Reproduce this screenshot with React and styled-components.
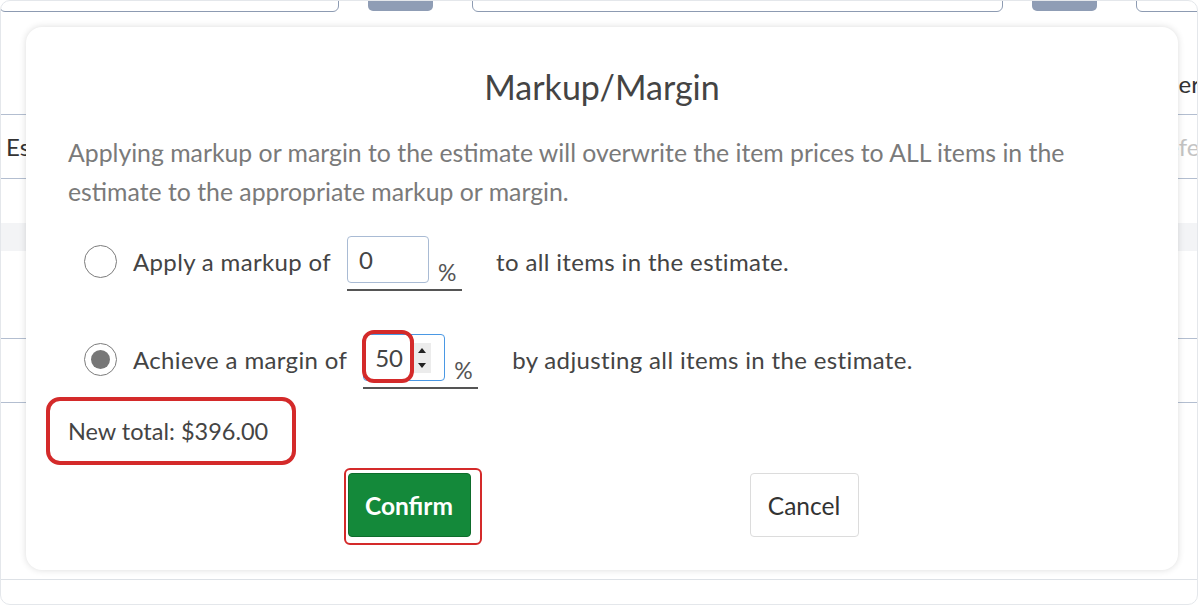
import styled, { createGlobalStyle } from 'styled-components';

const GlobalStyle = createGlobalStyle`
  html, body {
    margin: 0;
    padding: 0;
    background: #fff;
    overflow: hidden;
  }

  body {
    font-family: Lato, 'Liberation Sans', sans-serif;
  }
`;

function Radio({ checked }) {
  return <RadioCircle>{checked && <RadioDot />}</RadioCircle>;
}

function Spinner() {
  return (
    <SpinBox>
      <svg width="10" height="26" viewBox="0 0 10 26">
        <path d="M1 8 L5 3 L9 8 Z" fill="#222" />
        <path d="M1 18 L5 23 L9 18 Z" fill="#222" />
      </svg>
    </SpinBox>
  );
}

function App() {
  return (
    <>
      <GlobalStyle />
      <Frame>
        {/* page behind the dialog */}
        <Toolbar>
          <Field $width="340px" />
          <ToolButton />
          <Field $width="531px" />
          <ToolButton />
          <Field $grow />
        </Toolbar>

        <TableRow $height="102px">
          <Cell />
          <SideCell $align="flex-end" $shift="-50px">Owner</SideCell>
        </TableRow>
        <TableRow $height="63px">
          <Cell>Estimate #</Cell>
          <SideCell $muted $shift="-25px">Reference</SideCell>
        </TableRow>
        <TableRow $height="44px" $noBorder />
        <TableRow $height="28px" $band $noBorder />
        <TableRow $height="87px" />
        <TableRow $height="63px" />
        <TableRow $height="176px" $light />

        {/* dialog */}
        <Dialog>
          <Title>Markup/Margin</Title>
          <Intro>
            Applying markup or margin to the estimate will overwrite the item prices to ALL items in the
            estimate to the appropriate markup or margin.
          </Intro>

          <Options>
            <OptionRow>
              <Radio />
              <OptionText>Apply a markup of</OptionText>
              <PercentGroup>
                <NumberBox>0</NumberBox>
                <Percent>%</Percent>
              </PercentGroup>
              <OptionText>to all items in the estimate.</OptionText>
            </OptionRow>

            <OptionRow>
              <Radio checked />
              <OptionText>Achieve a margin of</OptionText>
              <PercentGroup>
                <NumberBox $focused>
                  50
                  <Spinner />
                  <ValueMark />
                </NumberBox>
                <Percent>%</Percent>
              </PercentGroup>
              <OptionText>by adjusting all items in the estimate.</OptionText>
            </OptionRow>
          </Options>

          <Total>
            New total: $396.00
            <TotalMark />
          </Total>

          <Actions>
            <ConfirmButton>
              Confirm
              <ButtonMark />
            </ConfirmButton>
            <CancelButton>Cancel</CancelButton>
          </Actions>
        </Dialog>
      </Frame>
    </>
  );
}

export default App;

const Frame = styled.div`
  position: relative;
  display: flex;
  flex-direction: column;

  width: 1198px;
  height: 605px;

  border: 1px solid #e4e7eb;
  border-radius: 10px;
  box-sizing: border-box;
  overflow: hidden;

  color: #333;
  font-size: 24px;
`;

const Toolbar = styled.div`
  display: flex;
  flex-shrink: 0;
  align-items: flex-end;

  height: 41px;
  margin-top: -30px;
`;

const Field = styled.div`
  flex: ${(p) => (p.$grow ? '1' : 'none')};

  width: ${(p) => p.$width || 'auto'};
  height: 41px;
  margin-left: ${(p) => (p.$width === '340px' ? '-2px' : '0')};
  margin-right: ${(p) => (p.$grow ? '-20px' : '0')};

  border: 1px solid #8d9bb2;
  border-radius: 6px;
  box-sizing: border-box;
`;

const ToolButton = styled.div`
  width: 65px;
  height: 40px;
  margin: 0 39px 1px 29px;

  border-radius: 5px;
  background-color: #8f9db5;
`;

const TableRow = styled.div`
  display: flex;
  flex-shrink: 0;
  justify-content: space-between;
  align-items: center;

  height: ${(p) => p.$height};

  border-bottom: ${(p) => (p.$noBorder ? 'none' : p.$light ? '1px solid #dde1e6' : '1px solid #b3bed0')};
  background-color: ${(p) => (p.$band ? '#f3f4f6' : 'transparent')};
`;

const Cell = styled.div`
  width: 20px;
  padding-left: 5px;

  white-space: nowrap;
  overflow: hidden;
`;

const SideCell = styled.div`
  align-self: ${(p) => p.$align || 'center'};

  width: 20px;
  padding-bottom: ${(p) => (p.$align ? '16px' : '0')};
  text-indent: ${(p) => p.$shift || '0'};

  color: ${(p) => (p.$muted ? '#c4c4c4' : '#333')};
  white-space: nowrap;
  overflow: hidden;
`;

const Dialog = styled.div`
  position: absolute;
  top: 26px;
  left: 25px;

  display: flex;
  flex-direction: column;

  width: 1152px;
  height: 543px;
  padding: 38px 42px 0;
  box-sizing: border-box;

  border-radius: 16px;
  background-color: #fff;
  box-shadow: 0 0 7px rgba(0, 0, 0, 0.14);
`;

const Title = styled.h2`
  margin: 0;

  color: #444;
  font-size: 34px;
  font-weight: 400;
  line-height: 44px;
  text-align: center;
`;

const Intro = styled.p`
  max-width: 1020px;
  margin: 24px 0 0;

  color: #7a7a7a;
  font-size: 24.8px;
  line-height: 39px;
`;

const Options = styled.div`
  display: flex;
  flex-direction: column;
  gap: 48px;

  margin-top: 25px;
  padding-left: 16px;
`;

const OptionRow = styled.div`
  display: flex;
  align-items: center;
`;

const RadioCircle = styled.span`
  display: flex;
  justify-content: center;
  align-items: center;

  width: 33px;
  height: 33px;
  margin-right: 16px;

  border: 1.5px solid #7c7c7c;
  border-radius: 50%;
  box-sizing: border-box;
`;

const RadioDot = styled.span`
  width: 19px;
  height: 19px;

  border-radius: 50%;
  background-color: #777;
`;

const OptionText = styled.span`
  color: #444;
  font-size: 24px;
  letter-spacing: 0.35px;
  white-space: nowrap;
`;

const PercentGroup = styled.span`
  display: flex;
  align-items: flex-end;

  width: 115px;
  margin: 0 34px -5px 16px;
  padding-bottom: 6px;

  border-bottom: 2px solid #555;
`;

const NumberBox = styled.span`
  position: relative;
  display: flex;
  align-items: center;

  width: 82px;
  height: 47px;
  padding-left: 11px;
  box-sizing: border-box;

  border: 1px solid ${(p) => (p.$focused ? '#4a98e4' : '#a9bbd4')};
  border-radius: 4px;

  color: #444;
  font-size: 24px;
`;

const SpinBox = styled.span`
  display: flex;
  justify-content: center;
  align-items: center;

  width: 18px;
  height: 30px;
  margin-left: auto;
  margin-right: 13px;

  background-color: #ececec;
`;

const Percent = styled.span`
  margin-left: 9px;

  color: #555;
  font-size: 23px;
  line-height: 22px;
`;

const ValueMark = styled.span`
  position: absolute;
  top: -5px;
  left: -2px;

  width: 52px;
  height: 53px;

  border: 4px solid #d42a2a;
  border-radius: 12px;
  box-sizing: border-box;
`;

const Total = styled.div`
  position: relative;
  align-self: flex-start;

  margin-top: 28px;

  color: #444;
  font-size: 23.5px;
  line-height: 39px;
`;

const TotalMark = styled.span`
  position: absolute;
  top: -15px;
  left: -22px;

  width: 250px;
  height: 68px;

  border: 4px solid #d42a2a;
  border-radius: 14px;
  box-sizing: border-box;
`;

const Actions = styled.div`
  display: flex;
  justify-content: center;
  gap: 279px;

  margin-top: 22px;
  padding-left: 2px;
`;

const BaseButton = styled.button`
  position: relative;

  height: 64px;
  padding: 0;

  border-radius: 4px;

  font-family: Lato, 'Liberation Sans', sans-serif;
  font-size: 24.5px;
  cursor: pointer;
`;

const ConfirmButton = styled(BaseButton)`
  width: 123px;

  border: 1px solid #0e6d2c;
  background-color: #14893a;

  color: #fff;
  font-weight: 700;
`;

const CancelButton = styled(BaseButton)`
  width: 109px;

  border: 1px solid #dcdcdc;
  background-color: #fff;

  color: #333;
`;

const ButtonMark = styled.span`
  position: absolute;
  top: -6px;
  left: -5px;

  width: 138px;
  height: 77px;

  border: 2px solid #d42a2a;
  border-radius: 6px;
  box-sizing: border-box;
`;
